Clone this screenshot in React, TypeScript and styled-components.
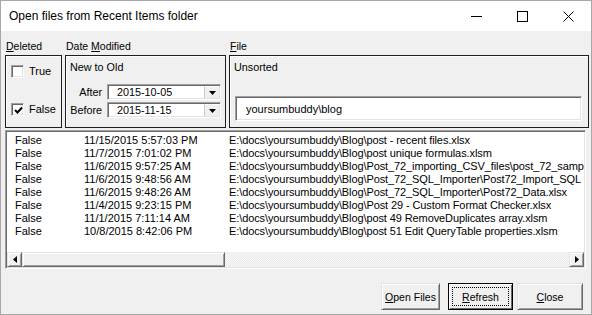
import styled, { createGlobalStyle } from 'styled-components'

const GlobalStyle = createGlobalStyle`
  html, body {
    margin: 0;
    padding: 0;
    background: #ffffff;
  }
  body {
    font-family: "Liberation Sans", Arial, sans-serif;
    color: #000;
  }
  * {
    box-sizing: border-box;
  }
`

const files = [
  ['False', '11/15/2015 5:57:03 PM', 'E:\\docs\\yoursumbuddy\\Blog\\post - recent files.xlsx'],
  ['False', '11/7/2015 7:01:02 PM', 'E:\\docs\\yoursumbuddy\\Blog\\post unique formulas.xlsm'],
  ['False', '11/6/2015 9:57:25 AM', 'E:\\docs\\yoursumbuddy\\Blog\\Post_72_importing_CSV_files\\post_72_samp'],
  ['False', '11/6/2015 9:48:56 AM', 'E:\\docs\\yoursumbuddy\\Blog\\Post_72_SQL_Importer\\Post72_Import_SQL'],
  ['False', '11/6/2015 9:48:26 AM', 'E:\\docs\\yoursumbuddy\\Blog\\Post_72_SQL_Importer\\Post72_Data.xlsx'],
  ['False', '11/4/2015 9:23:15 PM', 'E:\\docs\\yoursumbuddy\\Blog\\Post 29 - Custom Format Checker.xlsx'],
  ['False', '11/1/2015 7:11:14 AM', 'E:\\docs\\yoursumbuddy\\Blog\\post 49 RemoveDuplicates array.xlsm'],
  ['False', '10/8/2015 8:42:06 PM', 'E:\\docs\\yoursumbuddy\\Blog\\post 51 Edit QueryTable properties.xlsm'],
]

function CheckMark() {
  return (
    <svg width="9" height="9" viewBox="0 0 9 9">
      <path d="M1 4 L3.5 6.5 L8 1.5" stroke="#000" strokeWidth="2" fill="none" />
    </svg>
  )
}

function DownArrow() {
  return (
    <svg width="7" height="4" viewBox="0 0 7 4">
      <path d="M0 0 H7 L3.5 4 Z" fill="#000" />
    </svg>
  )
}

function SideArrow({ left }: { left?: boolean }) {
  return (
    <svg width="4" height="7" viewBox="0 0 4 7">
      <path d={left ? 'M4 0 V7 L0 3.5 Z' : 'M0 0 V7 L4 3.5 Z'} fill="#000" />
    </svg>
  )
}

export default function App() {
  return (
    <>
      <GlobalStyle />
      <Window>
        <TitleBar>
          <Title>Open files from Recent Items folder</Title>
          <Controls>
            <ControlButton>
              <svg width="11" height="11" viewBox="0 0 11 11">
                <path d="M0 5.5 H11" stroke="#000" strokeWidth="1" />
              </svg>
            </ControlButton>
            <ControlButton>
              <svg width="11" height="11" viewBox="0 0 11 11">
                <rect x="0.5" y="0.5" width="10" height="10" stroke="#000" fill="none" />
              </svg>
            </ControlButton>
            <ControlButton>
              <svg width="11" height="11" viewBox="0 0 11 11">
                <path d="M0.5 0.5 L10.5 10.5 M10.5 0.5 L0.5 10.5" stroke="#000" strokeWidth="1" />
              </svg>
            </ControlButton>
          </Controls>
        </TitleBar>

        <Body>
          <FilterRow>
            <Group>
              <GroupLabel><u>D</u>eleted</GroupLabel>
              <Frame>
                <CheckList>
                  <CheckRow>
                    <CheckBox />
                    True
                  </CheckRow>
                  <CheckRow>
                    <CheckBox>
                      <CheckMark />
                    </CheckBox>
                    False
                  </CheckRow>
                </CheckList>
              </Frame>
            </Group>

            <Group>
              <GroupLabel>Date <u>M</u>odified</GroupLabel>
              <Frame $padLeft={4}>
                <FrameCaption>New to Old</FrameCaption>
                <DateGrid>
                  <DateLabel>After</DateLabel>
                  <Combo>
                    <ComboText>2015-10-05</ComboText>
                    <ComboButton>
                      <DownArrow />
                    </ComboButton>
                  </Combo>
                  <DateLabel>Before</DateLabel>
                  <Combo>
                    <ComboText>2015-11-15</ComboText>
                    <ComboButton>
                      <DownArrow />
                    </ComboButton>
                  </Combo>
                </DateGrid>
              </Frame>
            </Group>

            <Group>
              <GroupLabel><u>F</u>ile</GroupLabel>
              <Frame $padLeft={4}>
                <FrameCaption>Unsorted</FrameCaption>
                <TextBox>yoursumbuddy\blog</TextBox>
              </Frame>
            </Group>
          </FilterRow>

          <ListBox>
            <Rows>
              {files.map(([deleted, date, path]) => (
                <Row key={path}>
                  <Cell>{deleted}</Cell>
                  <Cell>{date}</Cell>
                  <PathCell>{path}</PathCell>
                </Row>
              ))}
            </Rows>
            <HScroll>
              <ScrollButton>
                <SideArrow left />
              </ScrollButton>
              <ScrollThumb style={{ width: 203 }} />
              <ScrollTrack />
              <ScrollButton>
                <SideArrow />
              </ScrollButton>
            </HScroll>
          </ListBox>

          <ButtonRow>
            <DialogButton $width={59}><u>O</u>pen Files</DialogButton>
            <DialogButton $width={65} $default>
              <FocusRect><u>R</u>efresh</FocusRect>
            </DialogButton>
            <DialogButton $width={66}><u>C</u>lose</DialogButton>
          </ButtonRow>
        </Body>
      </Window>
    </>
  )
}

const Window = styled.div`
  width: 592px;
  height: 315px;
  border: 1px solid #a8a8a8;
  display: flex;
  flex-direction: column;
  background: #f0f0f0;
  overflow: hidden;
`

const TitleBar = styled.div`
  height: 30px;
  flex-shrink: 0;
  display: flex;
  align-items: center;
  background: #ffffff;
`

const Title = styled.div`
  flex: 1;
  padding-left: 8px;
  font-size: 12px;
  padding-bottom: 1px;
`

const Controls = styled.div`
  display: flex;
  height: 100%;
`

const ControlButton = styled.div`
  width: 46px;
  height: 100%;
  display: flex;
  align-items: center;
  justify-content: center;
`

const Body = styled.div`
  flex: 1;
  display: flex;
  flex-direction: column;
  padding: 9px 2px 4px 4px;
  font-size: 10.5px;
`

const FilterRow = styled.div`
  display: grid;
  grid-template-columns: 57px 161px 1fr;
  column-gap: 3px;
`

const Group = styled.div`
  display: flex;
  flex-direction: column;
`

const GroupLabel = styled.div`
  height: 13px;
  line-height: 13px;
  margin-bottom: 2px;
  padding-left: 1px;
  white-space: nowrap;
`

const Frame = styled.div<{ $padLeft?: number }>`
  height: 73px;
  border: 1px solid #1e1e1e;
  box-shadow: inset 1px 1px 0 #ffffff;
  padding: 5px ${({ $padLeft }) => $padLeft ?? 5}px 0 ${({ $padLeft }) => $padLeft ?? 5}px;
  display: flex;
  flex-direction: column;
`

const CheckList = styled.div`
  display: flex;
  flex-direction: column;
  gap: 25px;
  padding-top: 4px;
`

const CheckRow = styled.div`
  display: flex;
  align-items: center;
  gap: 5px;
  height: 13px;
  line-height: 13px;
  font-size: 11px;
`

const Sunken = `
  border-style: solid;
  border-width: 1px;
  border-color: #a0a0a0 #ffffff #ffffff #a0a0a0;
  box-shadow: inset 1px 1px 0 #696969, inset -1px -1px 0 #e3e3e3;
  background: #ffffff;
`

const CheckBox = styled.div`
  ${Sunken}
  width: 13px;
  height: 13px;
  display: flex;
  align-items: center;
  justify-content: center;
  padding-top: 1px;
  padding-left: 1px;
`

const FrameCaption = styled.div`
  height: 13px;
  line-height: 13px;
  white-space: nowrap;
  font-size: 10.8px;
`

const DateGrid = styled.div`
  display: grid;
  grid-template-columns: 32px 114px;
  column-gap: 5px;
  row-gap: 2px;
  margin-top: 10px;
  align-items: center;
`

const DateLabel = styled.div`
  justify-self: end;
  white-space: nowrap;
  font-size: 10.8px;
`

const Combo = styled.div`
  ${Sunken}
  height: 16px;
  display: flex;
  align-items: center;
`

const ComboText = styled.div`
  flex: 1;
  padding-left: 9px;
  line-height: 12px;
  font-size: 10.8px;
`

const ComboButton = styled.div`
  width: 15px;
  height: 12px;
  margin-right: 1px;
  background: #f0f0f0;
  border-left: 1px solid #c8c8c8;
  border-top: 1px solid #ffffff;
  display: flex;
  align-items: center;
  justify-content: center;
`

const TextBox = styled.div`
  ${Sunken}
  height: 25px;
  margin-top: 22px;
  margin-right: 2px;
  margin-left: 1px;
  padding-left: 10px;
  display: flex;
  align-items: center;
  font-size: 11px;
`

const ListBox = styled.div`
  ${Sunken}
  height: 139px;
  margin-top: 2px;
  margin-right: 3px;
  display: flex;
  flex-direction: column;
  overflow: hidden;
`

const Rows = styled.div`
  flex: 1;
  padding: 3px 0 0 9px;
  overflow: hidden;
`

const Row = styled.div`
  display: grid;
  grid-template-columns: 69px 145px auto;
  height: 13px;
  line-height: 13px;
  font-size: 11px;
  white-space: nowrap;
`

const Cell = styled.div`
  white-space: nowrap;
`

const PathCell = styled.div`
  white-space: nowrap;
  letter-spacing: -0.1px;
`

const HScroll = styled.div`
  height: 15px;
  display: flex;
  margin: 0 1px 1px 1px;
`

const Raised = `
  background: #f0f0f0;
  border-style: solid;
  border-width: 1px;
  border-color: #e3e3e3 #696969 #696969 #e3e3e3;
  box-shadow: inset 1px 1px 0 #ffffff, inset -1px -1px 0 #a0a0a0;
`

const ScrollButton = styled.div`
  ${Raised}
  width: 15px;
  height: 15px;
  display: flex;
  align-items: center;
  justify-content: center;
`

const ScrollThumb = styled.div`
  ${Raised}
  height: 15px;
`

const ScrollTrack = styled.div`
  flex: 1;
  background-color: #f5f5f5;
  background-image: repeating-conic-gradient(#e8e8e8 0 25%, #fafafa 0 50%);
  background-size: 2px 2px;
`

const ButtonRow = styled.div`
  display: flex;
  justify-content: flex-end;
  gap: 4px;
  margin-top: 14px;
  margin-right: 6px;
`

const DialogButton = styled.div<{ $width: number; $default?: boolean }>`
  ${Raised}
  width: ${({ $width }) => $width}px;
  height: 27px;
  display: flex;
  align-items: center;
  justify-content: center;
  font-size: 10.5px;
  white-space: nowrap;
  padding: ${({ $default }) => ($default ? '3px' : '0')};
  ${({ $default }) => ($default ? 'border-color: #000; box-shadow: inset 1px 1px 0 #ffffff, inset -1px -1px 0 #696969;' : '')}
  &:first-child {
    margin-right: 4px;
  }
`

const FocusRect = styled.div`
  width: 100%;
  height: 100%;
  border: 1px dotted #000;
  display: flex;
  align-items: center;
  justify-content: center;
`
